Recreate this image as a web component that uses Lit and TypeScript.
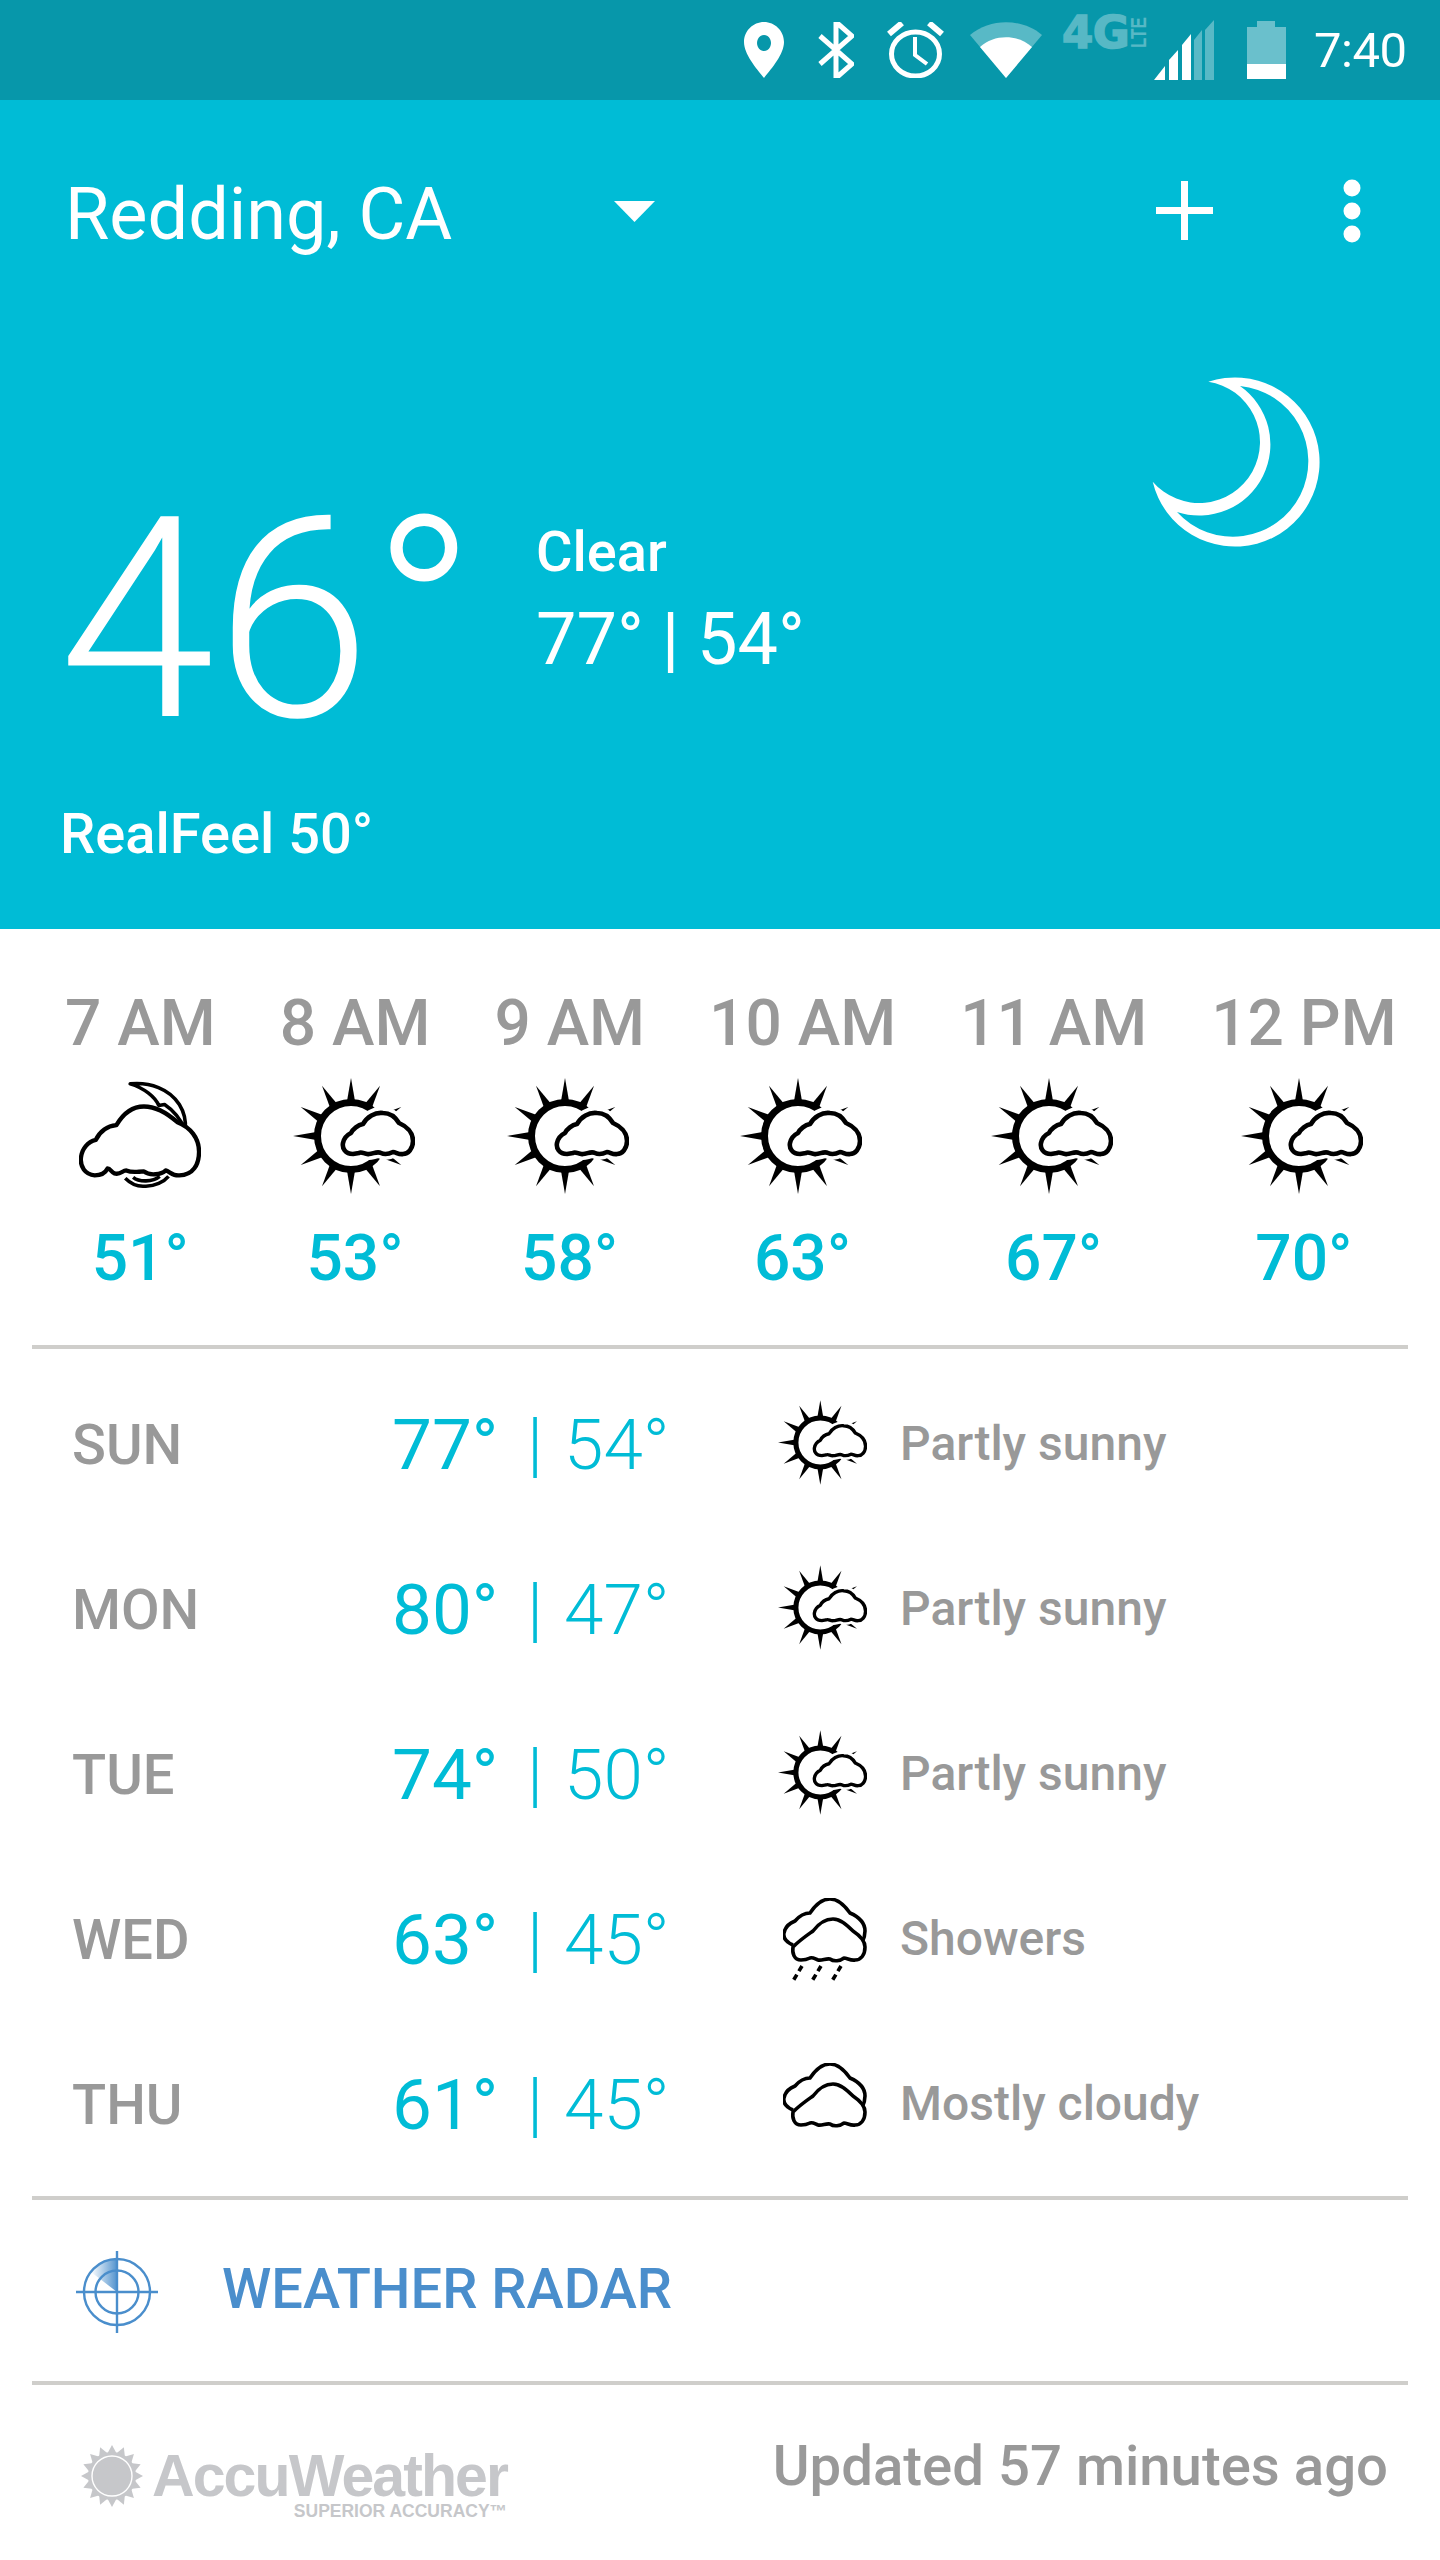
import { LitElement, html, css, svg } from "lit";
import { customElement } from "lit/decorators.js";

const spikes = Array.from({ length: 12 }, (_, i) => i * 30);
const CLOUD = "M60 76C52 76 49 70 50 65C51 60 54 57 58 55C60 51 65 47 70 46C74 39 82 34 90 35C98 35 103 40 106 45C113 48 120 54 120 63C120 71 115 76 110 76C106 77 103 74 100 74C96 76 92 77 88 75C84 73 80 76 76 76C72 77 69 73 66 75Z";

const sunCloud = () => html`<svg class="ic-full" viewBox="0 0 122 116">
  ${spikes.map((a) => svg`<path transform="rotate(${a} 58 58)" d="M58 0 L62.5 26 H53.5 Z" fill="#000"/>`)}
  <circle cx="58" cy="58" r="33.5" fill="#fff" stroke="#000" stroke-width="7"/>
  <path d="${CLOUD}" fill="#fff" stroke="#fff" stroke-width="12"/>
  <path d="${CLOUD}" fill="#fff" stroke="#000" stroke-width="4.6" stroke-linejoin="round"/>
</svg>`;

const moonCloud = () => html`<svg class="ic-full ic-moon" viewBox="0 0 124 110">
  <path d="M52 3C72 1 92 8 102 24C107 32 109 40 108 50C103 38 96 30 87 24L81 25C78 17 66 7 52 3Z" fill="#fff" stroke="#000" stroke-width="3.6" stroke-linejoin="round"/>
  <path d="M47 99C53 105 60 108 68 107C77 107 86 103 91 97M55 98C61 103 75 103 82 97" fill="none" stroke="#000" stroke-width="3.6"/>
  <path d="M16 96C6 95 1 87 2 78C3 69 9 62 17 60C21 52 28 46 38 45C45 33 55 26 66 26C78 26 91 34 100 42C113 47 122 58 122 72C122 85 116 96 102 96C96 97 92 92 88 91C84 95 72 97 66 92C60 92 55 94 48 91C44 91 42 96 36 94C33 93 32 89 29 89C27 93 22 96 16 96Z" fill="#fff" stroke="#000" stroke-width="4.4" stroke-linejoin="round"/>
</svg>`;

const cloudPair = (rain: boolean) => html`<svg class="ic-cloud" viewBox="0 0 84 84">
  <path d="M10 47C3 44 0 40 1 35C2 29 7 25 12 23C18 16 23 15 27 15C33 6 40 1 47 1C56 1 62 8 67 15C76 19 82 25 82 33C82 38 81 41 79 45" fill="none" stroke="#000" stroke-width="3.6"/>
  <path d="M18 62C11 62 9 55 10 49C17 42 23 38 30 33C36 25 43 21 50 21C58 21 65 28 70 33C76 37 82 42 82 49C82 57 78 62 72 62C68 63 64 60 61 60C57 63 51 64 47 61C43 60 39 63 35 62C32 61 30 59 27 60C25 61 22 62 18 62Z" fill="#fff" stroke="#000" stroke-width="3.6" stroke-linejoin="round"/>
  ${rain
    ? svg`<path d="M19 68L10 83M38 68L29 83M58 68L49 83" stroke="#000" stroke-width="3.6" stroke-dasharray="6 4" fill="none"/>`
    : ""}
</svg>`;

@customElement("app-root")
export class AppRoot extends LitElement {
  static styles = css`
    :host { display: block; width: 1440px; height: 2560px; background: #fff; font-family: Roboto, "Noto Sans", sans-serif; overflow: hidden; }
    .status { height: 100px; background: #0797aa; display: flex; align-items: flex-start; color: #fff; position: relative; }
    .status svg { display: block; }
    .s-pin { width: 40px; height: 56px; margin: 22px 0 0 744px; }
    .s-bt { width: 36px; height: 56px; margin: 22px 0 0 34px; }
    .s-alarm { width: 57px; height: 56px; margin: 22px 0 0 33px; }
    .s-wifi { width: 72px; height: 56px; margin: 22px 0 0 26px; }
    .s-net { width: 86px; height: 38px; margin: 14px 0 0 20px; display: flex; opacity: 0.32; align-items: flex-start; }
    .s-4g { font: 700 45px/38px "DejaVu Sans", sans-serif; -webkit-text-stroke: 1.5px #fff; width: 69px; letter-spacing: -0.5px; }
    .s-lte { font: 700 17px/17px "Liberation Sans", sans-serif; writing-mode: vertical-rl; transform: rotate(180deg) scaleX(1.25); height: 34px; text-align: center; margin-top: 2px; }
    .s-sig { width: 60px; height: 60px; margin: 20px 0 0 6px; }
    .s-bat { width: 39px; height: 58px; margin: 21px 0 0 33px; }
    .s-time { font-size: 49px; line-height: 56px; margin: 23px 0 0 28px; letter-spacing: -0.5px; }

    .hero { height: 829px; background: #00bcd6; color: #fff; box-sizing: border-box; }
    .top { display: flex; align-items: center; height: 224px; }
    .city { font-size: 72px; line-height: 90px; margin-left: 65px; width: 549px; margin-top: 6px; font-weight: 400; white-space: nowrap; }
    .caret { width: 41px; height: 21px; margin-top: -2px; }
    .plus { width: 57px; height: 59px; margin-left: 501px; margin-top: -3px; }
    .dots { width: 18px; height: 64px; margin-left: 130px; margin-top: -2px; }
    .body { display: flex; align-items: flex-start; }
    .main { display: flex; flex-direction: column; }
    .nowrow { display: flex; align-items: flex-start; margin-left: 65px; }
    .big { font-size: 281px; font-weight: 300; line-height: 300px; margin: 146px 0 0 -6px; letter-spacing: 0; width: 477px; }
    .cond { margin-top: 192px; }
    .clear { font-size: 56px; font-weight: 500; line-height: 72px; }
    .range { font-size: 72px; font-weight: 400; line-height: 84px; margin-top: 10px; white-space: nowrap; }
    .feel { font-size: 56px; font-weight: 500; line-height: 70px; margin: 29px 0 0 60px; }
    .moon { width: 220px; height: 220px; margin: 16px 100px 0 auto; }

    .hours { display: flex; gap: 64px; padding: 0 0 0 65px; height: 416px; box-sizing: border-box; }
    .h { display: flex; flex-direction: column; align-items: center; }
    .h-l { font-size: 64px; font-weight: 500; color: #999; line-height: 80px; margin-top: 55px; white-space: nowrap; }
    .h-i { height: 116px; width: 124px; margin-top: 14px; display: flex; justify-content: center; align-items: center; }
    .h-i .ic-full { width: 122px; height: 116px; display: block; margin-left: -3px; }
    .h-i .ic-moon { margin-top: -3px; margin-left: -1px; }
    .h-t { font-size: 64px; font-weight: 500; color: #00bcd6; line-height: 80px; margin-top: 25px; }

    .rule { height: 4px; background: #cfcecb; margin: 0 32px; }
    .days { padding: 13px 0 9px; }
    .d { height: 165px; display: grid; grid-template-columns: 320px 389px 119px auto; padding-left: 72px; align-items: center; }
    .d-n { font-size: 56px; font-weight: 500; color: #999; }
    .d-t { color: #00bcd6; display: flex; align-items: center; white-space: nowrap; font-weight: 300; }
    .hi { font-size: 71px; width: 135px; font-weight: 400; }
    .pipe { font-size: 72px; width: 37px; font-weight: 300; }
    .lo { font-size: 71px; }
    .d-i .ic-full { width: 89px; height: 85px; display: block; margin: -4px 0 0 -3px; }
    .ic-cloud { width: 84px; height: 84px; display: block; margin-left: 2px; }
    .d-w { font-size: 48px; font-weight: 500; color: #999; margin-top: -2px; }

    .radar { height: 181px; display: flex; align-items: center; }
    .radar svg { width: 84px; height: 84px; margin-left: 75px; margin-top: 2px; }
    .radar span { font-size: 56px; font-weight: 500; color: #4a8ecc; margin: 0 0 4px 63px; }

    .foot { display: flex; height: 175px; }
    .logo { margin-left: 80px; width: 440px; display: flex; align-items: flex-start; }
    .logo svg { width: 64px; height: 64px; margin-top: 59px; }
    .logo-t { margin-left: 8px; color: #c6c7ca; font-family: "Liberation Sans", sans-serif; font-weight: 700; }
    .lg { font-size: 59px; line-height: 54px; letter-spacing: -1.9px; margin-top: 64px; white-space: nowrap; }
    .sm { font-size: 17.5px; line-height: 16px; text-align: right; white-space: nowrap; }
    .upd { margin-left: auto; margin-right: 52px; font-size: 56.3px; font-weight: 500; color: #999; line-height: 70px; margin-top: 46px; white-space: nowrap; }
  `;

  render() {
    const hours = [
      ["7 AM", "51°", moonCloud()],
      ["8 AM", "53°", sunCloud()],
      ["9 AM", "58°", sunCloud()],
      ["10 AM", "63°", sunCloud()],
      ["11 AM", "67°", sunCloud()],
      ["12 PM", "70°", sunCloud()],
    ] as const;
    const days = [
      ["SUN", "77°", "54°", sunCloud(), "Partly sunny"],
      ["MON", "80°", "47°", sunCloud(), "Partly sunny"],
      ["TUE", "74°", "50°", sunCloud(), "Partly sunny"],
      ["WED", "63°", "45°", cloudPair(true), "Showers"],
      ["THU", "61°", "45°", cloudPair(false), "Mostly cloudy"],
    ] as const;
    const logoSpikes = Array.from({ length: 16 }, (_, i) => i * 22.5);
    return html`
      <div class="status">
        <svg class="s-pin" viewBox="0 0 40 56"><path fill-rule="evenodd" fill="#fff" d="M20 0C31 0 40 9 40 20C40 32 28 46 20 56C12 46 0 32 0 20C0 9 9 0 20 0ZM20 13A7 8 0 1 0 20.01 13Z"/></svg>
        <svg class="s-bt" viewBox="0 0 36 56"><path fill="none" stroke="#fff" stroke-width="5" d="M2 14L34 42L18 56V0L34 14L2 42"/></svg>
        <svg class="s-alarm" viewBox="0 0 57 56"><g fill="none" stroke="#fff"><ellipse cx="28.5" cy="32" rx="24" ry="22" stroke-width="5"/><path stroke-width="4" d="M28 15V33L40 42"/><path stroke-width="6" d="M2 12L15 1M55 12L42 1"/></g></svg>
        <svg class="s-wifi" viewBox="0 0 72 56"><path fill="#fff" opacity=".33" d="M0 13C20 -4 52 -4 72 13L36 56Z"/><path fill="#fff" d="M10 25C24 12 48 12 62 25L36 56Z"/></svg>
        <div class="s-net"><span class="s-4g">4G</span><span class="s-lte">LTE</span></div>
        <svg class="s-sig" viewBox="0 0 60 60"><g fill="#fff"><path d="M0 60L11 46V60Z"/><path d="M15 60V40L24 30V60Z"/><path d="M28 60V25L37 14V60Z"/></g><g fill="#fff" opacity=".33"><path d="M40 60V20L48 10V60Z"/><path d="M51 60V10L60 0V60Z"/></g></svg>
        <svg class="s-bat" viewBox="0 0 39 58"><path fill="#fff" opacity=".4" d="M10 0H28V6H39V43H0V6H10Z"/><path fill="#fff" d="M0 43H39V58H0Z"/></svg>
        <span class="s-time">7:40</span>
      </div>
      <div class="hero">
        <div class="top">
          <span class="city">Redding, CA</span>
          <svg class="caret" viewBox="0 0 41 21"><path fill="#fff" d="M0 0H41L20.5 21Z"/></svg>
          <svg class="plus" viewBox="0 0 57 59"><path fill="#fff" d="M25 0H32V26H57V33H32V59H25V33H0V26H25Z"/></svg>
          <svg class="dots" viewBox="0 0 18 64"><g fill="#fff"><circle cx="9" cy="9" r="8.5"/><circle cx="9" cy="32" r="8.5"/><circle cx="9" cy="55" r="8.5"/></g></svg>
        </div>
        <div class="body">
          <div class="main">
            <div class="nowrow">
              <div class="big">46°</div>
              <div class="cond"><div class="clear">Clear</div><div class="range">77° | 54°</div></div>
            </div>
            <div class="feel">RealFeel 50°</div>
          </div>
          <svg class="moon" viewBox="0 0 220 220"><path fill="#fff" fill-rule="evenodd" d="M88.3 41.7A84.6 84.6 0 1 1 32.7 141.7A61 61 0 1 0 88.3 41.7ZM120 46A75.5 75.5 0 1 1 57 172A71.2 71.2 0 0 0 120 46Z"/></svg>
        </div>
      </div>
      <div class="hours">
        ${hours.map(([l, t, i]) => html`<div class="h"><div class="h-l">${l}</div><div class="h-i">${i}</div><div class="h-t">${t}</div></div>`)}
      </div>
      <div class="rule"></div>
      <div class="days">
        ${days.map(([n, hi, lo, i, w]) => html`<div class="d">
          <div class="d-n">${n}</div>
          <div class="d-t"><span class="hi">${hi}</span><span class="pipe">|</span><span class="lo">${lo}</span></div>
          <div class="d-i">${i}</div>
          <div class="d-w">${w}</div>
        </div>`)}
      </div>
      <div class="rule"></div>
      <div class="radar">
        <svg viewBox="0 0 84 84">
          <defs><linearGradient id="rg" x1="0" x2="1" y1="0" y2="0"><stop offset="0" stop-color="#4a8ecc" stop-opacity="0"/><stop offset="1" stop-color="#4a8ecc" stop-opacity=".95"/></linearGradient></defs>
          <path d="M42 42V9A33 33 0 0 0 16 22Z" fill="url(#rg)"/>
          <g fill="none" stroke="#4a8ecc" stroke-width="2.4"><circle cx="42" cy="42" r="33"/><circle cx="42" cy="42" r="21.5"/><path d="M42 1V83M1 42H83"/></g>
        </svg>
        <span>WEATHER RADAR</span>
      </div>
      <div class="rule"></div>
      <div class="foot">
        <div class="logo">
          <svg viewBox="0 0 64 64">
            <g fill="#c6c7ca">${logoSpikes.map((a) => svg`<path transform="rotate(${a} 32 32)" d="M32 1L38 12H26Z"/>`)}<circle cx="32" cy="32" r="24"/></g>
            <circle cx="32" cy="32" r="20" fill="#c6c7ca" stroke="#fff" stroke-width="1.4"/>
          </svg>
          <div class="logo-t"><div class="lg">AccuWeather</div><div class="sm">SUPERIOR ACCURACY™</div></div>
        </div>
        <div class="upd">Updated 57 minutes ago</div>
      </div>
    `;
  }
}
